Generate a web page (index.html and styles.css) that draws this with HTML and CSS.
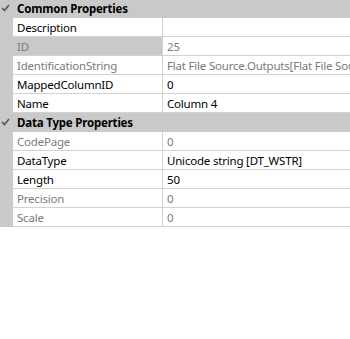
FILE: index.html
```html
<!DOCTYPE html>
<html lang="en">
<head>
    <meta charset="UTF-8">
    <title>Properties</title>
    <link rel="stylesheet" href="styles.css">
</head>
<body>

    <!-- Property grid -->
    <div class="grid">
        <div class="cat">
            <span class="gutter"><svg width="13" height="18" viewBox="0 0 13 18"><path d="M2 9 L4.5 11.5 L9 6" fill="none" stroke="#555" stroke-width="1.6"/></svg></span>
            <span class="cat-name">Common Properties</span>
        </div>
        <div class="row">
            <span class="gutter"></span>
            <span class="name">Description</span>
            <span class="value"></span>
        </div>
        <div class="row selected">
            <span class="gutter"></span>
            <span class="name off">ID</span>
            <span class="value off">25</span>
        </div>
        <div class="row">
            <span class="gutter"></span>
            <span class="name off">IdentificationString</span>
            <span class="value off">Flat File Source.Outputs[Flat File Source Output].Columns[Column 4]</span>
        </div>
        <div class="row">
            <span class="gutter"></span>
            <span class="name">MappedColumnID</span>
            <span class="value">0</span>
        </div>
        <div class="row">
            <span class="gutter"></span>
            <span class="name">Name</span>
            <span class="value">Column 4</span>
        </div>

        <div class="cat">
            <span class="gutter"><svg width="13" height="18" viewBox="0 0 13 18"><path d="M2 9 L4.5 11.5 L9 6" fill="none" stroke="#555" stroke-width="1.6"/></svg></span>
            <span class="cat-name">Data Type Properties</span>
        </div>
        <div class="row">
            <span class="gutter"></span>
            <span class="name off">CodePage</span>
            <span class="value off">0</span>
        </div>
        <div class="row">
            <span class="gutter"></span>
            <span class="name">DataType</span>
            <span class="value">Unicode string [DT_WSTR]</span>
        </div>
        <div class="row">
            <span class="gutter"></span>
            <span class="name">Length</span>
            <span class="value">50</span>
        </div>
        <div class="row">
            <span class="gutter"></span>
            <span class="name off">Precision</span>
            <span class="value off">0</span>
        </div>
        <div class="row">
            <span class="gutter"></span>
            <span class="name off">Scale</span>
            <span class="value off">0</span>
        </div>
    </div>

</body>
</html>
```

FILE: styles.css
```css
body {
    margin: 0;
    background: #fff;
    font-family: "Noto Sans", "Open Sans", sans-serif;
    font-size: 11.5px;
    letter-spacing: -0.2px;
    color: #000;
}
.grid {
    margin-top: -1px;
    width: 350px;
    overflow: hidden;
}
.cat {
    display: grid;
    grid-template-columns: 13px 1fr;
    height: 19px;
    background: #c9c9c9;
}
.gutter {
    display: block;
    background: #c9c9c9;
}
.gutter svg {
    display: block;
}
.cat-name {
    font-weight: bold;
    line-height: 19px;
    padding-left: 4px;
    white-space: nowrap;
}
.row {
    display: grid;
    grid-template-columns: 13px 150px 1fr;
    height: 19px;
}
.name, .value {
    line-height: 19px;
    height: 18px;
    border-bottom: 1px solid #d2d2d2;
    white-space: nowrap;
    overflow: hidden;
}
.name {
    padding-left: 4px;
    border-right: 1px solid #d2d2d2;
}
.value {
    padding-left: 4px;
}
.selected .name {
    background: #c9c9c9;
}
.off {
    color: #7a7a7a;
}
```
